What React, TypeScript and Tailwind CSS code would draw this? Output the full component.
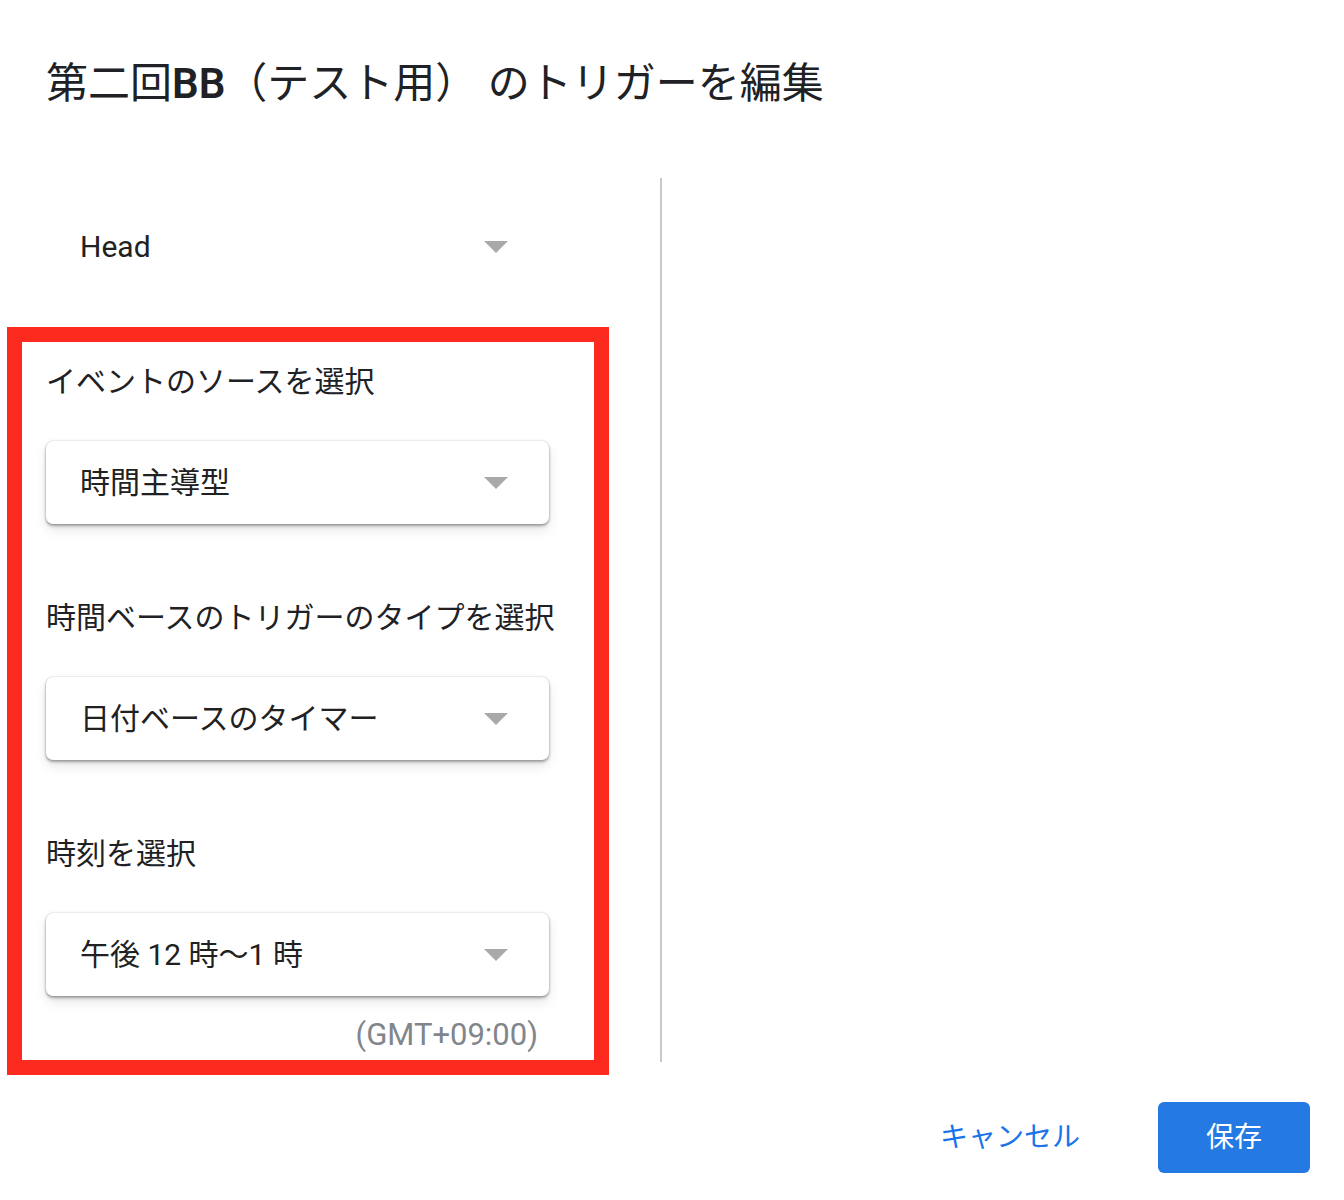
import React from "react";

const font = { fontFamily: 'Roboto, "Noto Sans CJK JP", sans-serif' };

const Arrow = () => (
  <svg width="24" height="12" viewBox="0 0 24 12" className="mr-[41px] shrink-0">
    <path d="M0 0h24L12 12z" fill="#a9a9a9" />
  </svg>
);

const Select = ({ value, flat = false }: { value: string; flat?: boolean }) => (
  <div
    className={`w-[503px] h-[83px] flex items-center justify-between rounded-[7px] bg-white ${
      flat
        ? ""
        : "shadow-[0_2px_3px_rgba(0,0,0,0.32),0_0_2px_rgba(0,0,0,0.22),0_6px_12px_rgba(0,0,0,0.1)]"
    }`}
  >
    <span className="pl-[34px] text-[30px] leading-[36px] text-[#212121]">{value}</span>
    <Arrow />
  </div>
);

const Field = ({ label, value }: { label: string; value: string }) => (
  <div className="flex flex-col">
    <div className="text-[30px] leading-[36px] text-[#202124]">{label}</div>
    <div className="mt-[41px]">
      <Select value={value} />
    </div>
  </div>
);

export default function App() {
  return (
    <div className="w-[1344px] h-[1200px] bg-white overflow-hidden" style={font}>
      <h1 className="pl-[46px] pt-[59px] text-[42px] leading-[50px] font-normal text-[#202124]">
        第二回<span className="font-semibold">BB</span>（テスト用） のトリガーを編集
      </h1>

      <div className="mt-[69px] flex items-start">
        <div className="w-[660px] flex flex-col">
          <div className="ml-[46px] mt-[27px]">
            <Select value="Head" flat />
          </div>

          <div className="ml-[7px] mt-[39px] w-[602px] border-[15px] border-[#fd2a20] pl-[24px] pt-[22px] pb-[7px]">
            <div className="flex flex-col gap-[76px]">
              <Field label="イベントのソースを選択" value="時間主導型" />
              <Field label="時間ベースのトリガーのタイプを選択" value="日付ベースのタイマー" />
              <Field label="時刻を選択" value="午後 12 時〜1 時" />
            </div>
            <div className="w-[492px] mt-[21px] text-right text-[31px] leading-[36px] text-[#80868b]">
              (GMT+09:00)
            </div>
          </div>
        </div>
        <div className="w-[2px] h-[884px] bg-[#c7c9cc]" />
      </div>

      <div className="mt-[27px] flex items-center justify-end pr-[34px]">
        <button className="text-[28px] leading-[36px] text-[#1a73e8] mr-[78px]">キャンセル</button>
        <button className="w-[152px] h-[71px] rounded-[6px] bg-[#2579e3] text-white text-[28px] leading-[36px]">
          保存
        </button>
      </div>
    </div>
  );
}
